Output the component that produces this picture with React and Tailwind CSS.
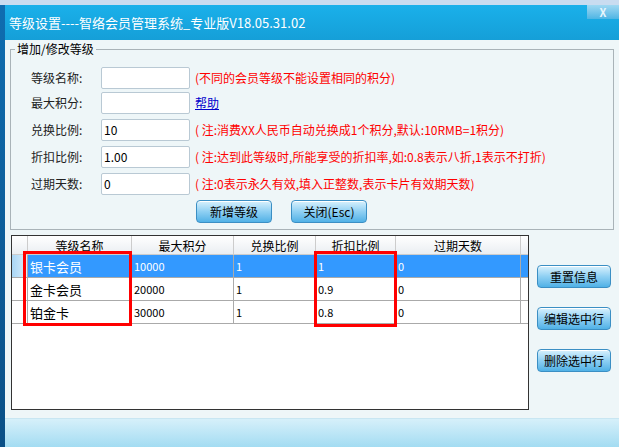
const F = { fontFamily: '"Noto Sans CJK SC", "Liberation Sans", sans-serif' };

function Btn({ children, w = "w-[76px]" }) {
  return (
    <div className={`${w} h-[23px] rounded-[4px] border border-[#3b8fc4] bg-gradient-to-b from-[#d8f1fd] via-[#8fd0f3] to-[#4fb1e6] flex items-center justify-center text-[12px] text-black shadow-[inset_0_1px_0_#fff]`}>
      {children}
    </div>
  );
}

const rowsForm = [
  ["等级名称:", "", "(不同的会员等级不能设置相同的积分)", "red"],
  ["最大积分:", "", "帮助", "link"],
  ["兑换比例:", "10", "( 注:消费XX人民币自动兑换成1个积分,默认:10RMB=1积分)", "red"],
  ["折扣比例:", "1.00", "( 注:达到此等级时,所能享受的折扣率,如:0.8表示八折,1表示不打折)", "red"],
  ["过期天数:", "0", "( 注:0表示永久有效,填入正整数,表示卡片有效期天数)", "red"],
];
const tops = ["mt-[3px]", "mt-[3px]", "mt-[5px]", "mt-[5px]", "mt-[5px]"];

const data = [
  ["银卡会员", "10000", "1", "1", "0"],
  ["金卡会员", "20000", "1", "0.9", "0"],
  ["铂金卡", "30000", "1", "0.8", "0"],
];
const cols = ["w-[104px]", "w-[102px]", "w-[82px]", "w-[80px]", "w-[125px]"];

export default function App() {
  return (
    <div style={F} className="w-[619px] h-[447px] overflow-hidden bg-[#dfeaf5] flex flex-col">
      <div className="h-[5px] bg-[#c9dcf0]" />
      <div className="flex flex-1">
        <div className="w-[5px] bg-gradient-to-b from-[#0f6db0] to-[#0a4f86]" />
        <div className="flex-1 flex flex-col bg-[#eef6f8] relative">
          <div className="h-[35px] bg-gradient-to-b from-[#1ab0ea] to-[#159fd8] flex items-center pl-[4px] text-white text-[13px] relative">
            等级设置----智络会员管理系统_专业版V18.05.31.02
            <div className="absolute right-0 top-0 w-[32px] h-[14px] bg-gradient-to-b from-[#9fd8f2] to-[#4cb5e4] text-[#e8f6fc] text-[11px] font-bold flex items-center justify-center">X</div>
          </div>
          <div className="mx-[5px] mt-[9px] h-[181px] border border-[#a9b3b8] relative pt-[14px] pl-[20px]">
            <div className="absolute -top-[9px] left-[4px] px-[2px] bg-[#eef6f8] text-[12px] leading-[16px]">增加/修改等级</div>
            {rowsForm.map((r, i) => (
              <div key={i} className={`flex items-center h-[22px] ${tops[i]} text-[12px]`}>
                <div className="w-[70px] text-[#222]">{r[0]}</div>
                <div className="w-[89px] h-[22px] bg-white border border-[#b9c9d4] rounded-[2px] px-[2px] leading-[20px]">{r[1]}</div>
                <div className={`ml-[5px] ${r[3] === "red" ? "text-[#ff0000]" : "text-[#0000cc] underline"}`}>{r[2]}</div>
              </div>
            ))}
            <div className="flex ml-[165px] mt-[5px] gap-[19px]">
              <Btn>新增等级</Btn>
              <Btn>关闭(Esc)</Btn>
            </div>
          </div>
          <div className="flex mt-[5px]">
            <div className="ml-[6px] w-[518px] h-[175px] border border-[#333] bg-white relative text-[12px]">
              <div className="flex h-[19px] bg-gradient-to-b from-white to-[#eaeef2] border-b border-[#ccc]">
                <div className="w-[16px] border-r border-[#ccc]" />
                {["等级名称", "最大积分", "兑换比例", "折扣比例", "过期天数"].map((h, i) => (
                  <div key={i} className={`${cols[i]} border-r border-[#ccc] text-center leading-[19px]`}>{h}</div>
                ))}
              </div>
              {data.map((d, ri) => (
                <div key={ri} className={`flex h-[23px] border-b border-[#aaa] ${ri === 0 ? "bg-[#3399ff] text-white" : ""}`}>
                  <div className={`w-[16px] border-r border-[#aaa] bg-white ${ri === 0 ? "bg-gradient-to-r from-[#a9d6f5] to-[#d9eefc]" : ""}`} />
                  {d.map((c, ci) => (
                    <div key={ci} className={`${cols[ci]} border-r border-[#aaa] leading-[23px] pl-[2px] ${ci === 0 ? "text-[13px]" : "text-[11px]"}`}>{c}</div>
                  ))}
                </div>
              ))}
              <div className="absolute left-[11px] top-[15px] w-[109px] h-[75px] border-[3px] border-[#ff0000]" />
              <div className="absolute left-[302px] top-[15px] w-[83px] h-[76px] border-[3px] border-[#ff0000]" />
            </div>
            <div className="ml-[8px] pt-[30px] flex flex-col gap-[19px]">
              <Btn w="w-[74px]">重置信息</Btn>
              <Btn w="w-[74px]">编辑选中行</Btn>
              <Btn w="w-[74px]">删除选中行</Btn>
            </div>
          </div>
          <div className="flex-1 mt-[8px] bg-gradient-to-b from-[#d6f0fa] to-[#a3dcf2] border-t border-[#c8e6f2]" />
        </div>
      </div>
    </div>
  );
}
